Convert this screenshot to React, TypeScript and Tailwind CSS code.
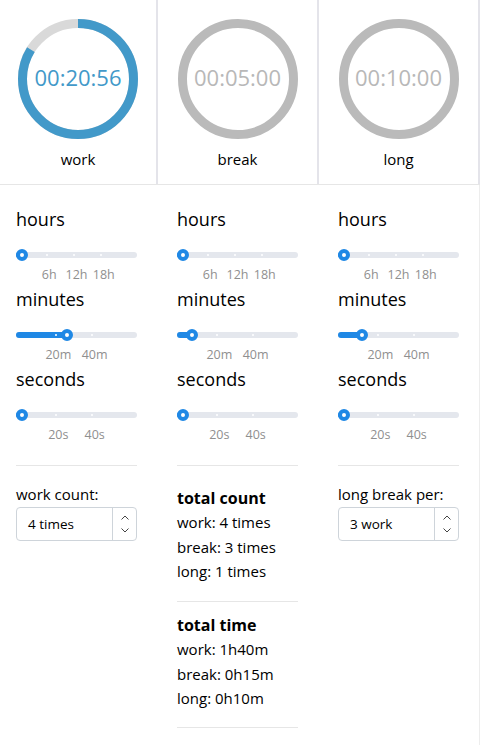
import React from "react";

type Tick = { v: number; label: string };

const TRACK_W = 121;
const pos = (v: number, max: number) => 6 + ((TRACK_W - 12) * v) / max;

function Slider({ value, max, ticks }: { value: number; max: number; ticks: Tick[] }) {
  const p = pos(value, max);
  return (
    <div>
      <div className="relative h-6 w-[121px]">
        <div className="absolute left-0 right-0 top-[9px] h-[6px] rounded-full bg-[#e4e7ed]" />
        <div
          className="absolute left-0 top-[9px] h-[6px] rounded-full bg-[#1f88e5]"
          style={{ width: p }}
        />
        {ticks.map((t) => (
          <div
            key={t.label}
            className="absolute top-[11px] h-[2px] w-[2px] rounded-full bg-white"
            style={{ left: pos(t.v, max) - 3.5 }}
          />
        ))}
        <div
          className="absolute top-[6px] h-3 w-3 rounded-full border-4 border-[#1f88e5] bg-white"
          style={{ left: p - 6 }}
        />
      </div>
      <div className="relative h-4 w-[121px] text-[12.5px] leading-4 text-[#8f8f8f]">
        {ticks.map((t) => (
          <span
            key={t.label}
            className="absolute top-0 -translate-x-1/2 whitespace-nowrap"
            style={{ left: pos(t.v, max) }}
          >
            {t.label}
          </span>
        ))}
      </div>
    </div>
  );
}

function Block({ title, value, max, ticks }: { title: string; value: number; max: number; ticks: Tick[] }) {
  return (
    <div className="h-[80px]">
      <div className="h-[27px] text-[18px] leading-[27px] text-black">{title}</div>
      <div className="mt-[10px]">
        <Slider value={value} max={max} ticks={ticks} />
      </div>
    </div>
  );
}

const hTicks = [
  { v: 6, label: "6h" },
  { v: 12, label: "12h" },
  { v: 18, label: "18h" },
];
const mTicks = [
  { v: 20, label: "20m" },
  { v: 40, label: "40m" },
];
const sTicks = [
  { v: 20, label: "20s" },
  { v: 40, label: "40s" },
];

function Sliders({ minutes }: { minutes: number }) {
  return (
    <div>
      <Block title="hours" value={0} max={24} ticks={hTicks} />
      <Block title="minutes" value={minutes} max={60} ticks={mTicks} />
      <Block title="seconds" value={0} max={60} ticks={sTicks} />
      <div className="mt-[19px] h-px w-[121px] bg-[#e6e6e6]" />
    </div>
  );
}

function Ring({ text, fraction, active, label }: { text: string; fraction: number; active: boolean; label: string }) {
  const r = 55.5;
  const c = 2 * Math.PI * r;
  return (
    <div className="flex flex-col items-center pt-[19px]">
      <div className="relative h-[120px] w-[120px]">
        <svg width="120" height="120" viewBox="0 0 120 120" className="absolute inset-0">
          <circle cx="60" cy="60" r={r} fill="none" stroke={active ? "#d9d9d9" : "#bababa"} strokeWidth="9" />
          {active && (
            <circle
              cx="60"
              cy="60"
              r={r}
              fill="none"
              stroke="#4299c9"
              strokeWidth="9"
              strokeDasharray={`${c * fraction} ${c}`}
              transform="rotate(-90 60 60)"
            />
          )}
        </svg>
        <div
          className={`absolute inset-0 flex items-center justify-center pb-[4px] text-[22px] ${
            active ? "text-[#4299c9]" : "text-[#b8b8b8]"
          }`}
        >
          {text}
        </div>
      </div>
      <div className="mt-[10px] text-[15px] leading-5 text-black">{label}</div>
    </div>
  );
}

function NumberBox({ value }: { value: string }) {
  return (
    <div className="flex h-[34px] w-[121px] rounded-[4px] border border-[#ced4da] bg-white">
      <div className="flex flex-1 items-center pl-[11px] text-[13.5px] text-black">{value}</div>
      <div className="flex w-[24px] flex-col items-center justify-center gap-[8px] border-l border-[#ced4da]">
        <svg width="8" height="5" viewBox="0 0 8 5">
          <path d="M0.5 4.5 L4 1 L7.5 4.5" fill="none" stroke="#444" strokeWidth="1" />
        </svg>
        <svg width="8" height="5" viewBox="0 0 8 5">
          <path d="M0.5 0.5 L4 4 L7.5 0.5" fill="none" stroke="#444" strokeWidth="1" />
        </svg>
      </div>
    </div>
  );
}

export default function App() {
  return (
    <div className="h-[745px] w-[480px] bg-white font-['Open_Sans',sans-serif]">
      <div className="grid grid-cols-[158px_161px_161px] border-b border-[#e6e6e6]">
        <div className="h-[184px] border-r-2 border-[#e4e4ea]">
          <Ring text="00:20:56" fraction={1256 / 1500} active label="work" />
        </div>
        <div className="h-[184px] border-r-2 border-[#e4e4ea]">
          <Ring text="00:05:00" fraction={1} active={false} label="break" />
        </div>
        <div className="h-[184px] border-r-2 border-[#e4e4ea]">
          <Ring text="00:10:00" fraction={1} active={false} label="long" />
        </div>
      </div>
      <div className="grid h-[560px] grid-cols-[158px_161px_161px]">
        <div className="pl-[16px] pt-[21px]">
          <Sliders minutes={25} />
          <div className="mt-[18px] text-[15px] leading-5 text-black">work count:</div>
          <div className="mt-[3px]">
            <NumberBox value="4 times" />
          </div>
        </div>
        <div className="pl-[19px] pt-[21px]">
          <Sliders minutes={5} />
          <div className="pt-[20px]">
            <div className="text-[16px] font-bold leading-6 text-black">total count</div>
            <div className="text-[15px] leading-[24.5px] text-black">work: 4 times</div>
            <div className="text-[15px] leading-[24.5px] text-black">break: 3 times</div>
            <div className="text-[15px] leading-[24.5px] text-black">long: 1 times</div>
          </div>
          <div className="mt-[17.5px] h-px w-[121px] bg-[#e6e6e6]" />
          <div className="pt-[11px]">
            <div className="text-[16px] font-bold leading-6 text-black">total time</div>
            <div className="text-[15px] leading-[24.5px] text-black">work: 1h40m</div>
            <div className="text-[15px] leading-[24.5px] text-black">break: 0h15m</div>
            <div className="text-[15px] leading-[24.5px] text-black">long: 0h10m</div>
          </div>
          <div className="mt-[16.5px] h-px w-[121px] bg-[#e6e6e6]" />
        </div>
        <div className="border-r border-[#ededed] pl-[19px] pt-[21px]">
          <Sliders minutes={10} />
          <div className="mt-[18px] text-[15px] leading-5 text-black">long break per:</div>
          <div className="mt-[3px]">
            <NumberBox value="3 work" />
          </div>
        </div>
      </div>
    </div>
  );
}
